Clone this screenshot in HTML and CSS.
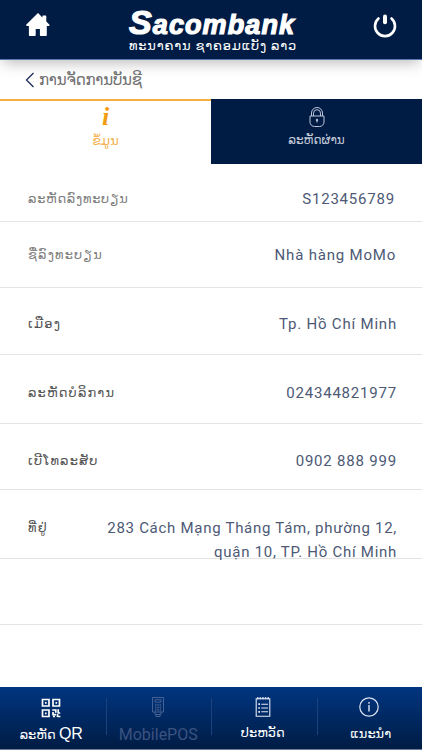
FILE: index.html
```
<!DOCTYPE html>
<html lang="lo">
<head>
    <meta charset="UTF-8">
    <meta name="viewport" content="width=device-width, initial-scale=1.0">
    <title>Sacombank Laos</title>
    <link rel="stylesheet" href="styles.css">
</head>
<body>
    <header class="header">
        <svg class="home-icon" viewBox="0 0 24 24" width="24" height="24" fill="#fff">
            <path d="M11.200.7.400 11.500c-.6.7-.2 1.600.6 1.600h1.900v8.800c0 .7.5 1.100 1.100 1.100h4.700c.6 0 1-.4 1-1v-6.100h4.200v6.100c0 .6.4 1 1 1h4.800c.6 0 1.100-.4 1.100-1.100v-8.800h1.900c.9 0 1.200-.9.600-1.600l-3-3V3.400c0-.6-.4-1-1-1h-1.900c-.6 0-1 .4-1 1v1.100L12.800.7c-.5-.5-1.100-.5-1.600 0z"/>
        </svg>
        <div class="brand">
            <div class="logo"><span class="logo-initial">S</span>acombank</div>
            <div class="brand-sub">ທະນາຄານ ຊາຄອມແບັງ ລາວ</div>
        </div>
        <svg class="power-icon" viewBox="0 0 24 24" width="24" height="24" fill="none" stroke="#fff" stroke-linecap="round">
            <path d="M5.500 4.500A10 10 0 1 0 18.500 4.500" stroke-width="2.600"/>
            <path d="M12 2.400v5.800" stroke-width="4"/>
        </svg>
    </header>

    <div class="page-title">
        <svg viewBox="0 0 10 16" width="10" height="16" fill="none" stroke="#1c2f55" stroke-width="1.300">
            <path d="M8.500 1 1.500 8l7 7"/>
        </svg>
        <h1>ການຈັດການບັນຊີ</h1>
    </div>

    <nav class="tabs">
        <div class="tab active">
            <span class="info-icon">i</span>
            <span class="tab-label">ຂໍ້ມູນ</span>
        </div>
        <div class="tab">
            <svg viewBox="0 0 16 20" width="16" height="20" fill="none" stroke="#bcc5d8" stroke-width="1">
                <path d="M2.500 9V6a5.500 5.500 0 0 1 11 0v3"/>
                <path d="M4.500 9V6.200a3.500 3.500 0 0 1 7 0V9"/>
                <path d="M1 9h14v6a4.500 4.500 0 0 1-4.500 4.500h-5A4.500 4.500 0 0 1 1 15z"/>
                <circle cx="8" cy="13" r=".8" fill="#fff"/>
                <path d="M8 13v2.500"/>
            </svg>
            <span class="tab-label tab-label-password">ລະຫັດຜ່ານ</span>
        </div>
    </nav>

    <main class="details">
        <div class="row row-code">
            <span class="label label-light">ລະຫັດລົງທະບຽນ</span>
            <span class="value">S123456789</span>
        </div>
        <div class="row row-name">
            <span class="label label-light">ຊື່ລົງທະບຽນ</span>
            <span class="value">Nhà hàng MoMo</span>
        </div>
        <div class="row row-city">
            <span class="label">ເມືອງ</span>
            <span class="value">Tp. Hồ Chí Minh</span>
        </div>
        <div class="row row-service">
            <span class="label">ລະຫັດບໍລິການ</span>
            <span class="value">024344821977</span>
        </div>
        <div class="row row-phone">
            <span class="label">ເບີໂທລະສັບ</span>
            <span class="value">0902 888 999</span>
        </div>
        <div class="row row-address">
            <span class="label">ທີ່ຢູ່</span>
            <span class="value">283 Cách Mạng Tháng Tám, phường 12,<br>quận 10, TP. Hồ Chí Minh</span>
        </div>
        <div class="row row-empty"></div>
    </main>

    <footer class="footer">
        <div class="item item-qr">
            <svg viewBox="0 0 20 20" width="20" height="20" fill="none" stroke="#fff" stroke-width="1.700">
                <path d="M1.500 1.500h6.500v6.500H1.500zM12 1.500h6.500v6.500H12zM1.500 12h6.500v6.500H1.500z"/>
                <path d="M4 4.800h1.600M14.500 4.800h1.600M4 15.300h1.600M11.200 12h3.600v2.800M17.200 11.200v3.800h2M12 14v2.600h3M12 18.500h2M16.600 18.500h2.800M16.500 16v3"/>
            </svg>
            <span>ລະຫັດ <b>QR</b></span>
        </div>
        <div class="item item-pos">
            <svg viewBox="0 0 14 20" width="14" height="20" fill="none" stroke="#456092" stroke-width="1">
                <path d="M1.500.5h11v14.500h-11zM4 15v2.500h6V15M5 17.500v2h4v-2"/>
                <path d="M4 2.800h6v2.400H4z"/>
                <path d="M4 8h1.500M6.300 8h1.500M8.600 8h1.500M4 10.500h1.500M6.300 10.500h1.500M8.600 10.500h1.500M4 13h1.500M6.300 13h1.500M8.600 13h1.500" stroke-width="1.400"/>
            </svg>
            <span>MobilePOS</span>
        </div>
        <div class="item item-history">
            <svg viewBox="0 0 16 20" width="16" height="20" fill="none" stroke="#e3e9f5" stroke-width="1.100">
                <path d="M1.200 1.800h13.600v17.400H1.200z"/>
                <path d="M2 1.200h12" stroke-width="2" stroke-dasharray="1.600 1"/>
                <path d="M6.300 7.200H13M6.300 11H13M6.300 14.800H13"/>
                <path d="M3.300 7.200H5M3.300 11H5M3.300 14.800H5" stroke-width="1.700"/>
            </svg>
            <span>ປະຫວັດ</span>
        </div>
        <div class="item item-guide">
            <svg viewBox="0 0 20 20" width="20" height="20" fill="none" stroke="#dce4f4" stroke-width="1.200">
                <circle cx="10" cy="10" r="9.200"/>
                <path d="M10 8v6.500M10 5v1.700" stroke-width="1.400"/>
            </svg>
            <span>ແນະນຳ</span>
        </div>
    </footer>
</body>
</html>
```
FILE: styles.css
```
* {
    box-sizing: border-box;
}
body {
    margin: 0;
    width: 422px;
    height: 750px;
    overflow: hidden;
    display: flex;
    flex-direction: column;
    background: #fff;
    font-family: Roboto, "DejaVu Sans", sans-serif;
}
.header {
    height: 60px;
    flex-shrink: 0;
    display: flex;
    justify-content: space-between;
    align-items: flex-start;
    padding: 0 25px 0 26px;
    background: #001c44;
    border-bottom: 1px solid #5578b5;
    box-shadow: 0 5px 14px -3px rgba(0, 0, 0, 0.3);
    color: #fff;
}
.home-icon {
    margin-top: 13px;
}
.power-icon {
    margin-top: 14px;
}
.brand {
    width: 168px;
    margin-left: 3px;
    white-space: nowrap;
}
.logo {
    height: 38px;
    padding-top: 7px;
    line-height: 30px;
    font-family: "Liberation Sans", Arial, sans-serif;
    font-size: 27px;
    font-weight: bold;
    font-style: italic;
    letter-spacing: 1.1px;
    -webkit-text-stroke: 1.2px #fff;
}
.logo-initial {
    font-size: 34px;
}
.brand-sub {
    font-size: 13px;
    line-height: 15px;
    letter-spacing: 0.8px;
}
.page-title {
    height: 39px;
    flex-shrink: 0;
    display: flex;
    align-items: center;
    gap: 4px;
    padding-left: 25px;
}
.page-title h1 {
    margin: 0;
    font-size: 15px;
    font-weight: normal;
    letter-spacing: -0.2px;
    color: #707070;
}
.tabs {
    height: 65px;
    flex-shrink: 0;
    display: flex;
}
.tab {
    flex: 1;
    display: flex;
    flex-direction: column;
    align-items: center;
    padding-top: 8px;
    background: #001c44;
    color: #c3cbda;
}
.tab.active {
    background: #fff;
    border-top: 2px solid #f5b041;
    padding-top: 4px;
    color: #f5b14f;
}
.info-icon {
    height: 25px;
    line-height: 23px;
    font-family: "Liberation Serif", serif;
    font-size: 26px;
    font-weight: bold;
    font-style: italic;
    color: #f39c12;
}
.tab-label {
    font-size: 13px;
    line-height: 22px;
}
.tab-label-password {
    margin-top: 2px;
    font-size: 12px;
}
.details {
    flex: 1;
}
.row {
    display: flex;
    justify-content: space-between;
    padding: 0 25px 0 28px;
    border-bottom: 1px solid #e4e4e4;
    line-height: 24px;
}
.row-code {
    height: 58px;
    padding-top: 23px;
    padding-right: 27px;
}
.row-name {
    height: 66px;
    padding-top: 21px;
    padding-right: 26px;
}
.row-city {
    height: 67px;
    padding-top: 24px;
}
.row-service {
    height: 69px;
    padding-top: 26px;
}
.row-phone {
    height: 66px;
    padding-top: 25px;
}
.row-address {
    height: 69px;
    padding-top: 26px;
}
.row-address .value {
    letter-spacing: 0.72px;
}
.row-empty {
    height: 66px;
}
.label {
    font-size: 13px;
    letter-spacing: 1.15px;
    color: #555;
    white-space: nowrap;
}
.label-light {
    color: #808080;
}
.row-code .label {
    letter-spacing: 0.7px;
}
.value {
    font-size: 15px;
    letter-spacing: 0.8px;
    text-align: right;
    color: #4d5975;
    white-space: nowrap;
}
.footer {
    height: 63px;
    flex-shrink: 0;
    display: flex;
    background: linear-gradient(#003580, #001c44);
    border-bottom: 1px solid #6b7b99;
    color: #fff;
}
.item {
    width: 105.5px;
    position: relative;
    display: flex;
    flex-direction: column;
    align-items: center;
    padding-top: 11px;
    font-size: 13px;
    line-height: 24px;
    white-space: nowrap;
}
.item span {
    margin-top: 4px;
}
.item b {
    font-family: "Liberation Sans", Arial, sans-serif;
    font-size: 16px;
    font-weight: normal;
}
/* thin divider between the footer items */
.item + .item::before {
    content: "";
    position: absolute;
    left: 0;
    top: 11px;
    width: 1px;
    height: 37px;
    background: #1d417c;
}
.item-qr {
    padding-right: 3px;
}
.item-pos {
    padding-top: 10px;
    font-size: 16px;
    color: #3b5381;
}
.item-pos span {
    margin-top: 6px;
}
.item-history {
    padding-top: 10px;
    padding-right: 2px;
}
.item-guide {
    padding-top: 10px;
}
.item-guide span {
    margin-top: 5px;
    padding-left: 3px;
}
```
